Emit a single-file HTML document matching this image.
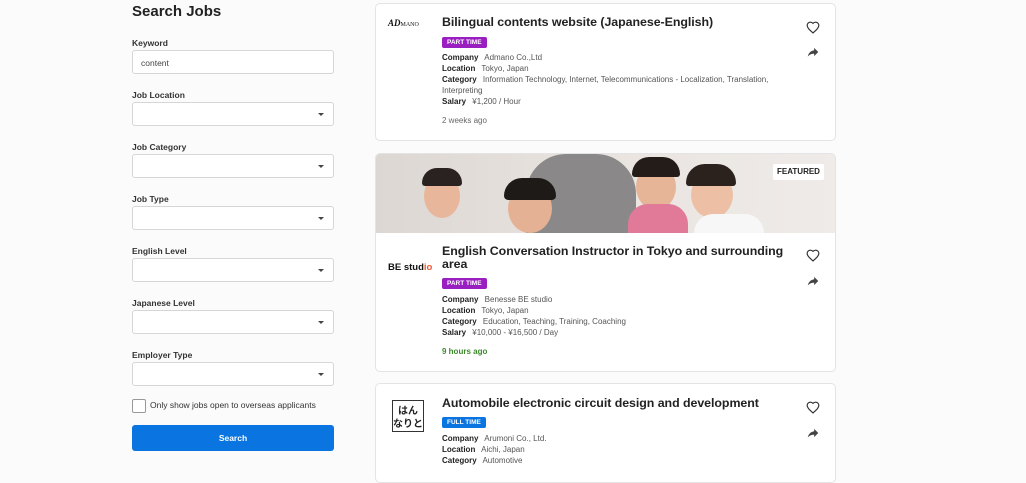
<!DOCTYPE html>
<html><head><meta charset="utf-8"><style>
body{margin:0;width:1026px;height:466px;overflow:hidden;background:#fbfbfb;font-family:"Liberation Sans",sans-serif;color:#222;position:relative}
.a{position:absolute}
h1{position:absolute;left:132px;top:3px;margin:0;font-size:15px;font-weight:bold;color:#222}
.lbl{position:absolute;left:132px;font-size:8.5px;font-weight:bold;color:#333}
.inp{position:absolute;left:132px;width:202px;height:24px;border:1px solid #d6d6d6;border-radius:3px;background:#fff;font-size:8.5px;color:#444;box-sizing:border-box;padding:7px 8px}
.inp.s::after{content:"";position:absolute;right:9px;top:10px;border-left:3px solid transparent;border-right:3px solid transparent;border-top:3px solid #444}
.card{position:absolute;left:375px;width:461px;background:#fff;border:1px solid #e4e4e4;border-radius:5px;box-sizing:border-box;overflow:hidden}
.t{position:absolute;left:66px;font-size:12.4px;font-weight:bold;color:#222;line-height:13px;width:370px;letter-spacing:-0.05px}
.b{position:absolute;left:66px;height:11px;padding:0 5px;font-size:6.5px;font-weight:bold;color:#fff;line-height:11px;border-radius:2px}
.d{position:absolute;left:66px;font-size:8px;color:#555;line-height:11px;width:345px}
.d b{color:#222;margin-right:4px}
.ago{position:absolute;left:66px;font-size:8px;color:#666}
.ic{position:absolute;left:430px}
</style></head><body>
<h1>Search Jobs</h1>
<div class="lbl" style="top:38px">Keyword</div><div class="inp" style="top:50px">content</div>
<div class="lbl" style="top:90px">Job Location</div><div class="inp s" style="top:102px"></div>
<div class="lbl" style="top:142px">Job Category</div><div class="inp s" style="top:154px"></div>
<div class="lbl" style="top:194px">Job Type</div><div class="inp s" style="top:206px"></div>
<div class="lbl" style="top:246px">English Level</div><div class="inp s" style="top:258px"></div>
<div class="lbl" style="top:298px">Japanese Level</div><div class="inp s" style="top:310px"></div>
<div class="lbl" style="top:350px">Employer Type</div><div class="inp s" style="top:362px"></div>
<div class="a" style="left:132px;top:399px;width:12px;height:12px;border:1px solid #999;border-radius:2px;background:#fff"></div>
<div class="a" style="left:150px;top:400px;font-size:8.5px;color:#333">Only show jobs open to overseas applicants</div>
<div class="a" style="left:132px;top:425px;width:202px;height:26px;background:#0a74e0;border-radius:3px;color:#fff;font-size:8.5px;font-weight:bold;text-align:center;line-height:26px">Search</div>

<svg width="0" height="0" style="position:absolute"><defs>
<symbol id="h" viewBox="0 0 24 24"><path d="M12 20.5l-1.4-1.3C5.4 14.5 2 11.4 2 7.6 2 4.5 4.4 2 7.5 2c1.7 0 3.4.8 4.5 2.1C13.1 2.8 14.8 2 16.5 2 19.6 2 22 4.5 22 7.6c0 3.8-3.4 6.9-8.6 11.6z" fill="none" stroke="#333" stroke-width="2"/></symbol>
<symbol id="sh" viewBox="0 0 24 24"><path d="M14 5v4C7 10 4 15 3 20c2.5-3.5 6-5.1 11-5.1V19l7-7z" fill="#444"/></symbol>
</defs></svg>

<div class="card" style="top:3px;height:138px">
 <div class="a" style="left:12px;top:14px;font-family:'Liberation Serif',serif;font-size:9px;font-weight:bold;font-style:italic;color:#111">AD<span style="font-size:6px;font-style:normal;font-weight:normal">MANO</span></div>
 <div class="t" style="top:12px">Bilingual contents website (Japanese-English)</div>
 <div class="b" style="top:33px;background:#9a1fc0">PART TIME</div>
 <div class="d" style="top:48px"><b>Company</b> Admano Co.,Ltd<br><b>Location</b> Tokyo, Japan<br><b>Category</b> Information Technology, Internet, Telecommunications - Localization, Translation, Interpreting<br><b>Salary</b> ¥1,200 / Hour</div>
 <div class="ago" style="top:112px">2 weeks ago</div>
 <svg class="ic" style="top:17px" width="14" height="14"><use href="#h"/></svg>
 <svg class="ic" style="top:41px" width="14" height="14"><use href="#sh"/></svg>
</div>

<div class="card" style="top:153px;height:219px">
 <div class="a" style="left:0;top:0;width:461px;height:79px;background:linear-gradient(90deg,#dcd7d3,#e9e4e0 50%,#efebe8)">
  <div class="a" style="left:150px;top:0;width:110px;height:79px;background:#8a8888;border-radius:40px 40px 0 0"></div>
  <div class="a" style="left:48px;top:20px;width:36px;height:44px;background:#e8b69a;border-radius:50%"></div>
  <div class="a" style="left:46px;top:14px;width:40px;height:18px;background:#2a2220;border-radius:20px 20px 4px 4px"></div>
  <div class="a" style="left:132px;top:30px;width:44px;height:49px;background:#e5b194;border-radius:50%"></div>
  <div class="a" style="left:128px;top:24px;width:52px;height:22px;background:#1e1a18;border-radius:26px 26px 6px 6px"></div>
  <div class="a" style="left:260px;top:10px;width:40px;height:46px;background:#e6b497;border-radius:50%"></div>
  <div class="a" style="left:256px;top:3px;width:48px;height:20px;background:#231c19;border-radius:24px 24px 4px 4px"></div>
  <div class="a" style="left:252px;top:50px;width:60px;height:29px;background:#e07a98;border-radius:20px 20px 0 0"></div>
  <div class="a" style="left:315px;top:18px;width:42px;height:46px;background:#edc0a5;border-radius:50%"></div>
  <div class="a" style="left:310px;top:10px;width:50px;height:22px;background:#2b211d;border-radius:24px 24px 4px 4px"></div>
  <div class="a" style="left:318px;top:60px;width:70px;height:19px;background:#f7f7f7;border-radius:20px 20px 0 0"></div>
 </div>
 <div class="a" style="left:397px;top:10px;padding:0 4px;height:16px;line-height:16px;background:#fff;border-radius:2px;font-size:8px;font-weight:bold;color:#222">FEATURED</div>
 <div class="a" style="left:12px;top:108px;font-size:9.5px;font-weight:bold;color:#111">BE stud<span style="color:#e53">io</span></div>
 <div class="t" style="top:91px;width:345px">English Conversation Instructor in Tokyo and surrounding area</div>
 <div class="b" style="top:124px;background:#9a1fc0">PART TIME</div>
 <div class="d" style="top:140px"><b>Company</b> Benesse BE studio<br><b>Location</b> Tokyo, Japan<br><b>Category</b> Education, Teaching, Training, Coaching<br><b>Salary</b> ¥10,000 - ¥16,500 / Day</div>
 <div class="ago" style="top:193px;color:#3a8a2a;font-weight:bold">9 hours ago</div>
 <svg class="ic" style="top:95px" width="14" height="14"><use href="#h"/></svg>
 <svg class="ic" style="top:120px" width="14" height="14"><use href="#sh"/></svg>
</div>

<div class="card" style="top:383px;height:100px">
 <div class="a" style="left:16px;top:16px;width:32px;height:32px;border:1.5px solid #333;box-sizing:border-box;font-family:'Noto Sans CJK JP',sans-serif;font-size:10px;font-weight:bold;line-height:13px;text-align:center;padding-top:2px">はん<br>なりと</div>
 <div class="t" style="top:13px">Automobile electronic circuit design and development</div>
 <div class="b" style="top:33px;background:#0a74e0">FULL TIME</div>
 <div class="d" style="top:49px"><b>Company</b> Arumoni Co., Ltd.<br><b>Location</b> Aichi, Japan<br><b>Category</b> Automotive</div>
 <svg class="ic" style="top:17px" width="14" height="14"><use href="#h"/></svg>
 <svg class="ic" style="top:42px" width="14" height="14"><use href="#sh"/></svg>
</div>
</body></html>
